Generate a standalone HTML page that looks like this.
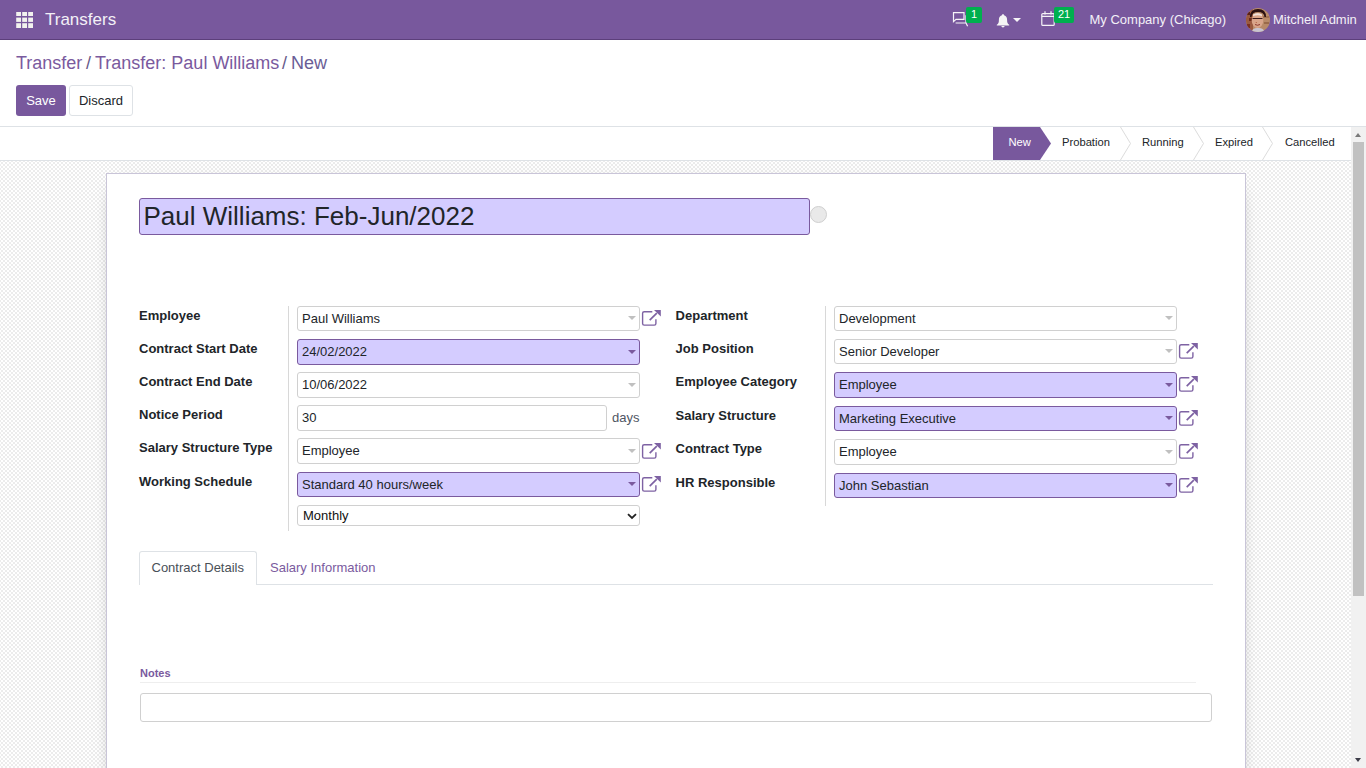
<!DOCTYPE html>
<html><head><meta charset="utf-8">
<style>
*{box-sizing:border-box;margin:0;padding:0}
html,body{width:1366px;height:768px;overflow:hidden;background:#fff;font-family:"Liberation Sans",sans-serif;color:#212529}
.a{position:absolute;white-space:nowrap}
.t13{font-size:13px;line-height:13px}
.nav{position:absolute;left:0;top:0;width:1366px;height:40px;background:#78589D;border-bottom:1px solid #5C3F7B}
.navtxt{color:#f3f0f7;font-size:13px;line-height:13px}
.bg{position:absolute;left:0;top:161px;width:1351px;height:607px;
 background:repeating-conic-gradient(#ececec 0 25%,#fff 0 50%) 1px 3px/4px 4px}
.sheet{position:absolute;left:106px;top:173px;width:1140px;height:620px;background:#fff;border:1px solid #C9C5D8;box-shadow:0 5px 20px -15px #000}
.lbl{font-weight:bold;font-size:13px;line-height:13px;color:#212529}
.fld{position:absolute;height:25px;border:1px solid #d0d0d0;border-radius:3px;background:#fff}
.req{background:#D4CCFF;border-color:#7A5A9E}
.fv{position:absolute;left:4px;top:5px;font-size:13px;line-height:13px;color:#212529;white-space:nowrap}
.car{position:absolute;right:3px;top:10px;width:0;height:0;border-left:4px solid transparent;border-right:4px solid transparent;border-top:4px solid #c0c0c0}
.req .car{border-top-color:#7A5A9E}
.ext{position:absolute;width:20px;height:17px}
</style></head><body>

<!-- NAVBAR -->
<div class="nav"></div>
<svg class="a" style="left:16px;top:12px" width="17" height="17" viewBox="0 0 17 17"><g fill="#f2f2ee"><rect x="0.2" y="0" width="4.8" height="4"/><rect x="6.2" y="0" width="4.8" height="4"/><rect x="12.2" y="0" width="4.8" height="4"/><rect x="0.2" y="5.6" width="4.8" height="4.3"/><rect x="6.2" y="5.6" width="4.8" height="4.3"/><rect x="12.2" y="5.6" width="4.8" height="4.3"/><rect x="0.2" y="11.2" width="4.8" height="4.8"/><rect x="6.2" y="11.2" width="4.8" height="4.8"/><rect x="12.2" y="11.2" width="4.8" height="4.8"/></g></svg>
<div class="a" style="left:45px;top:11px;color:#f3f0f7;font-size:17px;line-height:17px">Transfers</div>

<!-- chat icon -->
<svg class="a" style="left:952px;top:11px" width="17" height="17" viewBox="0 0 17 17">
<g fill="none" stroke="#f6f4f8" stroke-width="1.2">
<path d="M1.5 1.6 H12 V8.3 H4 L1.5 10.6 Z"/>
<path d="M14 4.2 V12 H3.6 M14 12 L15.6 15.2"/>
</g></svg>
<div class="a" style="left:966px;top:7px;width:16px;height:16px;background:#00AF4E;border-radius:2px;color:#fff;font-size:11px;line-height:15px;text-align:center">1</div>

<!-- bell -->
<svg class="a" style="left:996px;top:14px" width="14" height="14" viewBox="0 0 14 14">
<path fill="#f4f4f4" d="M7 0.2 C7.8 0.2 8.1 0.8 8.1 1.3 C10.3 1.9 11.1 3.8 11.1 5.9 C11.1 8.4 11.6 9.6 13.2 10.8 V11.4 H0.8 V10.8 C2.4 9.6 2.9 8.4 2.9 5.9 C2.9 3.8 3.7 1.9 5.9 1.3 C5.9 0.8 6.2 0.2 7 0.2 Z M5.4 12 H8.6 C8.6 12.9 7.9 13.4 7 13.4 C6.1 13.4 5.4 12.9 5.4 12 Z"/>
</svg>
<div class="a" style="left:1013px;top:18px;width:0;height:0;border-left:4px solid transparent;border-right:4px solid transparent;border-top:4px solid #f6f4f8"></div>

<!-- calendar -->
<svg class="a" style="left:1041px;top:11px" width="15" height="16" viewBox="0 0 15 16">
<g fill="none" stroke="#f6f4f8" stroke-width="1.2">
<rect x="0.8" y="2.6" width="12.4" height="11.8" rx="1"/>
<path d="M0.8 5.4 H13.2 M4 0.2 V3.6 M10 0.2 V3.6"/>
</g></svg>
<div class="a" style="left:1054px;top:7px;width:20px;height:16px;background:#00AF4E;border-radius:2px;color:#fff;font-size:11px;line-height:15px;text-align:center">21</div>

<div class="a navtxt" style="left:1089.5px;top:13px">My Company (Chicago)</div>
<svg class="a" style="left:1246px;top:8px" width="24" height="24" viewBox="0 0 24 24"><defs><clipPath id="cc"><circle cx="12" cy="12" r="12"/></clipPath></defs>
<g clip-path="url(#cc)"><rect width="24" height="24" fill="#b88a68"/>
<rect x="0" y="0" width="7" height="24" fill="#9a5a40"/>
<rect x="1" y="4" width="3" height="3" fill="#5a2018"/><rect x="3" y="10" width="3" height="3" fill="#6a2a1a"/><rect x="1" y="16" width="3" height="4" fill="#7a3020"/>
<rect x="17" y="8" width="6" height="2" fill="#a07050"/><rect x="18" y="14" width="5" height="2" fill="#9a6a4a"/>
<path d="M4 9 Q4 1 12 1 Q20 1 20 9 L18.5 9 Q18 4 12 4 Q6 4 5.5 9 Z" fill="#2a1010"/>
<ellipse cx="11.5" cy="12.5" rx="5.8" ry="7.5" fill="#d9a58a"/>
<path d="M7 6.5 Q12 4 16 6.5 L16 8 Q12 6.5 7 8 Z" fill="#f2e2da"/>
<path d="M6.5 10.5 H16.5" stroke="#3a1a1a" stroke-width="1.1"/>
<path d="M9 16.5 Q11.5 18 14 16.5" stroke="#8a3a30" stroke-width="1" fill="none"/>
<path d="M10 14 L10.5 15" stroke="#b06040" stroke-width="1"/>
<path d="M5 24 Q7 19.5 12 20 Q17 19.5 19 24 Z" fill="#c8c4d0"/>
</g></svg>
<div class="a navtxt" style="left:1273px;top:13px">Mitchell Admin</div>

<!-- CONTROL PANEL -->
<div class="a" style="left:16px;top:54px;font-size:18px;line-height:18px;color:#7A5A9E">Transfer</div>
<div class="a" style="left:86px;top:54px;font-size:18px;line-height:18px;color:#675a8a">/</div>
<div class="a" style="left:95px;top:54px;font-size:18px;line-height:18px;color:#7A5A9E">Transfer: Paul Williams</div>
<div class="a" style="left:282px;top:54px;font-size:18px;line-height:18px;color:#675a8a">/</div>
<div class="a" style="left:291px;top:54px;font-size:18px;line-height:18px;color:#6a5d96">New</div>
<div class="a" style="left:16px;top:85px;width:50px;height:31px;background:#78589D;border-radius:3px;color:#fff;font-size:13px;line-height:31px;text-align:center">Save</div>
<div class="a" style="left:69px;top:85px;width:64px;height:31px;background:#fff;border:1px solid #dee2e6;border-radius:3px;color:#212529;font-size:13px;line-height:29px;text-align:center">Discard</div>
<div class="a" style="left:0;top:126px;width:1366px;height:1px;background:#dee2e6"></div>

<!-- STATUS BAR -->
<div class="a" style="left:0;top:127px;width:1351px;height:34px;background:#fff;border-bottom:1px solid #dee2e6"></div>
<svg class="a" style="left:993px;top:127px" width="360" height="33" viewBox="0 0 360 33">
<path d="M0 0 H47 L58 16.5 L47 33 H0 Z" fill="#78589D"/>
<g fill="none" stroke="#dcdcdc" stroke-width="1">
<path d="M127.5 0 L137.5 16.5 L127.5 33"/>
<path d="M200.5 0 L210.5 16.5 L200.5 33"/>
<path d="M269.5 0 L279.5 16.5 L269.5 33"/>
</g></svg>
<div class="a" style="left:1008.5px;top:137px;font-size:11.2px;line-height:11px;color:#fff">New</div>
<div class="a" style="left:1062px;top:137px;font-size:11.2px;line-height:11px;color:#212529">Probation</div>
<div class="a" style="left:1142px;top:137px;font-size:11.2px;line-height:11px;color:#212529">Running</div>
<div class="a" style="left:1215px;top:137px;font-size:11.2px;line-height:11px;color:#212529">Expired</div>
<div class="a" style="left:1285px;top:137px;font-size:11.2px;line-height:11px;color:#212529">Cancelled</div>

<!-- BACKGROUND + SHEET -->
<div class="bg"></div>
<div class="sheet"></div>

<!-- title -->
<div class="a" style="left:139px;top:198px;width:671px;height:37px;background:#D4CCFF;border:1px solid #7A5A9E;border-radius:3px"></div>
<div class="a" style="left:143.5px;top:203px;font-size:26px;line-height:26px;color:#212529">Paul Williams: Feb-Jun/2022</div>
<div class="a" style="left:810px;top:206px;width:17px;height:17px;border-radius:50%;background:#e9e9e9;border:1px solid #cfcfcf"></div>

<!-- separators -->
<div class="a" style="left:288px;top:306px;width:1px;height:225px;background:#d8d8d8"></div>
<div class="a" style="left:825px;top:306px;width:1px;height:200px;background:#d8d8d8"></div>

<!-- left labels -->
<div class="a lbl" style="left:139px;top:309px">Employee</div>
<div class="a lbl" style="left:139px;top:342px">Contract Start Date</div>
<div class="a lbl" style="left:139px;top:375px">Contract End Date</div>
<div class="a lbl" style="left:139px;top:408px">Notice Period</div>
<div class="a lbl" style="left:139px;top:441px">Salary Structure Type</div>
<div class="a lbl" style="left:139px;top:475px">Working Schedule</div>

<!-- left fields -->
<div class="fld" style="left:297px;top:306px;width:343px;height:25px"><div class="fv">Paul Williams</div><div class="car" style="top:9px"></div></div>
<div class="fld req" style="left:297px;top:339px;width:343px;height:26px"><div class="fv">24/02/2022</div><div class="car" style="top:10px"></div></div>
<div class="fld" style="left:297px;top:372px;width:343px;height:26px"><div class="fv">10/06/2022</div><div class="car" style="top:10px"></div></div>
<div class="fld" style="left:297px;top:405px;width:310px;height:26px"><div class="fv">30</div></div>
<div class="a t13" style="left:612px;top:411px;color:#4f5663">days</div>
<div class="fld" style="left:297px;top:438px;width:343px;height:26px"><div class="fv">Employee</div><div class="car" style="top:10px"></div></div>
<div class="fld req" style="left:297px;top:472px;width:343px;height:25px"><div class="fv">Standard 40 hours/week</div><div class="car" style="top:9px"></div></div>
<div class="fld" style="left:297px;top:505px;width:343px;height:21px"><div class="fv" style="top:3px;left:5px;color:#111">Monthly</div>
<svg class="a" style="left:329px;top:7px" width="10" height="7" viewBox="0 0 10 7"><path d="M1 1.2 L5 5 L9 1.2" fill="none" stroke="#222" stroke-width="1.8"/></svg></div>

<!-- right labels -->
<div class="a lbl" style="left:675.6px;top:309px">Department</div>
<div class="a lbl" style="left:675.6px;top:342px">Job Position</div>
<div class="a lbl" style="left:675.6px;top:375px">Employee Category</div>
<div class="a lbl" style="left:675.6px;top:409px">Salary Structure</div>
<div class="a lbl" style="left:675.6px;top:442px">Contract Type</div>
<div class="a lbl" style="left:675.6px;top:476px">HR Responsible</div>

<!-- right fields -->
<div class="fld" style="left:834px;top:306px;width:343px;height:25px"><div class="fv">Development</div><div class="car" style="top:9px"></div></div>
<div class="fld" style="left:834px;top:339px;width:343px;height:25px"><div class="fv">Senior Developer</div><div class="car" style="top:9px"></div></div>
<div class="fld req" style="left:834px;top:372px;width:343px;height:26px"><div class="fv">Employee</div><div class="car" style="top:10px"></div></div>
<div class="fld req" style="left:834px;top:406px;width:343px;height:25px"><div class="fv">Marketing Executive</div><div class="car" style="top:9px"></div></div>
<div class="fld" style="left:834px;top:439px;width:343px;height:26px"><div class="fv">Employee</div><div class="car" style="top:10px"></div></div>
<div class="fld req" style="left:834px;top:473px;width:343px;height:25px"><div class="fv">John Sebastian</div><div class="car" style="top:9px"></div></div>

<!-- external link icons -->
<svg width="0" height="0" style="position:absolute"><defs>
<g id="ext"><path d="M11.3 2.7 H3.2 Q1.6 2.7 1.6 4.3 V14.5 Q1.6 16.1 3.2 16.1 H13.3 Q14.9 16.1 14.9 14.5 V10.3" fill="none" stroke="#7E62A3" stroke-width="1.4"/>
<path d="M8.7 11.2 L15.8 4.2" stroke="#7E62A3" stroke-width="1.7"/>
<path d="M13 1 H19.8 V7.6 Z" fill="#7E62A3"/></g></defs></svg>
<svg class="ext a" style="left:641px;top:309px" viewBox="0 0 20 17"><use href="#ext"/></svg>
<svg class="ext a" style="left:641px;top:442px" viewBox="0 0 20 17"><use href="#ext"/></svg>
<svg class="ext a" style="left:641px;top:475px" viewBox="0 0 20 17"><use href="#ext"/></svg>
<svg class="ext a" style="left:1178px;top:342px" viewBox="0 0 20 17"><use href="#ext"/></svg>
<svg class="ext a" style="left:1178px;top:375px" viewBox="0 0 20 17"><use href="#ext"/></svg>
<svg class="ext a" style="left:1178px;top:409px" viewBox="0 0 20 17"><use href="#ext"/></svg>
<svg class="ext a" style="left:1178px;top:442px" viewBox="0 0 20 17"><use href="#ext"/></svg>
<svg class="ext a" style="left:1178px;top:476px" viewBox="0 0 20 17"><use href="#ext"/></svg>

<!-- tabs -->
<div class="a" style="left:139px;top:584px;width:1074px;height:1px;background:#dee2e6"></div>
<div class="a" style="left:139px;top:551px;width:118px;height:34px;background:#fff;border:1px solid #dee2e6;border-bottom:none;border-radius:3px 3px 0 0"></div>
<div class="a t13" style="left:151.5px;top:561px;color:#495057">Contract Details</div>
<div class="a t13" style="left:270px;top:561px;color:#7A5A9E">Salary Information</div>

<!-- notes -->
<div class="a" style="left:140px;top:668px;font-size:11px;line-height:11px;font-weight:bold;color:#7A5A9E">Notes</div>
<div class="a" style="left:140px;top:682px;width:1056px;height:1px;background:#eeeeee"></div>
<div class="a" style="left:140px;top:693px;width:1072px;height:29px;border:1px solid #d0d0d0;border-radius:3px;background:#fff"></div>

<!-- scrollbar -->
<div class="a" style="left:1351px;top:127px;width:15px;height:641px;background:#f1f1f1"></div>
<div class="a" style="left:1353px;top:142px;width:11px;height:454px;background:#c1c1c1"></div>
<div class="a" style="left:1355px;top:133px;width:0;height:0;border-left:3.5px solid transparent;border-right:3.5px solid transparent;border-bottom:4px solid #7a7a7a"></div>
<div class="a" style="left:1355px;top:758px;width:0;height:0;border-left:3.5px solid transparent;border-right:3.5px solid transparent;border-top:4px solid #3c3c48"></div>

</body></html>
